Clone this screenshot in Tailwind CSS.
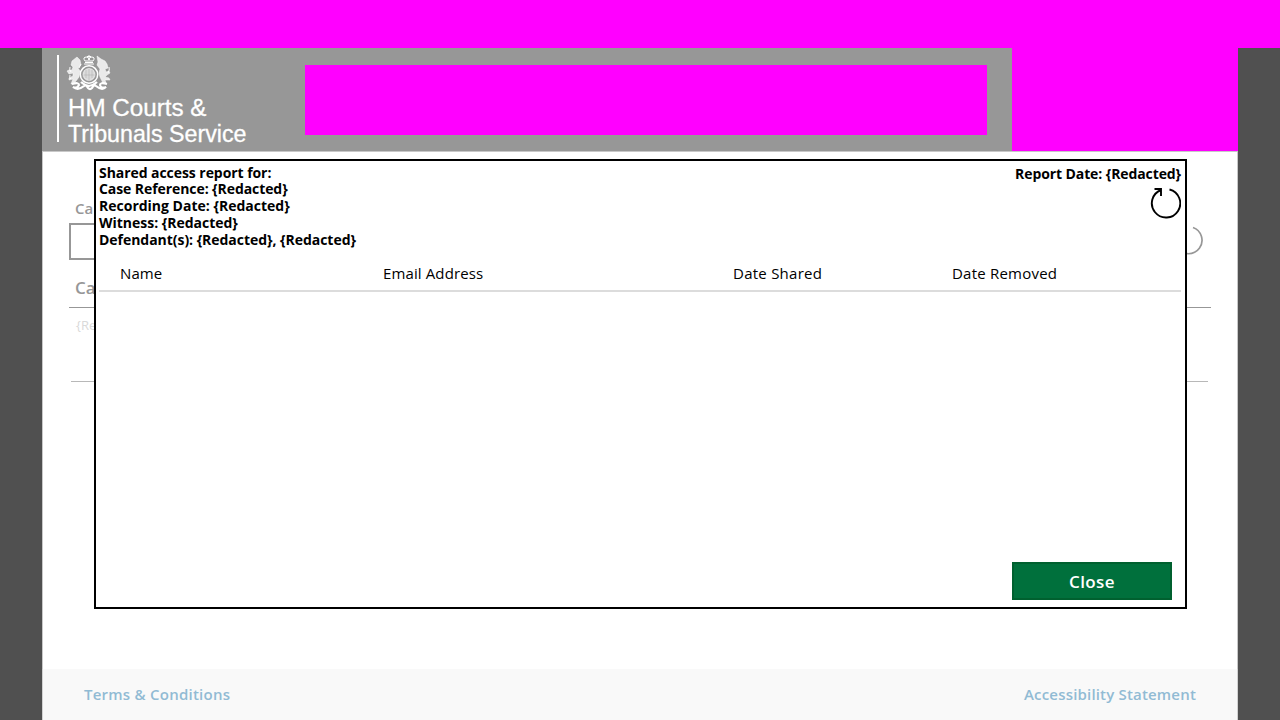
<!DOCTYPE html>
<html lang="en">
<head>
<meta charset="utf-8">
<title>Shared access report</title>
<script src="https://cdn.jsdelivr.net/npm/@tailwindcss/browser@4"></script>
</head>
<body class="h-[720px] w-[1280px] overflow-hidden bg-[#505050] font-['Open_Sans','Noto_Sans',sans-serif]">
<div class="flex h-full flex-col">
  <div class="h-12 shrink-0 bg-[#ff00ff]"></div>
  <div class="relative mx-[42px] flex grow flex-col bg-white">
    <header class="flex h-[103px] shrink-0 bg-[#979797] pl-[15px]">
      <div class="mt-[7px] flex h-[87px] w-[248px] border-l-2 border-white pl-[9px]">
        <svg class="h-[88px] w-[190px] shrink-0 overflow-visible" viewBox="0 0 190 88" fill="none" stroke="#fff">
          <g stroke-width="1">
            <path d="M17 6q-3-4 2-4q2 1 2 3q0-2 2-3q5 0 2 4zM16 9h10M21 5V0M19 1.500h4M17 7.500h8"/>
            <circle cx="21" cy="19.500" r="8.700" stroke-width="1.500"/>
            <circle cx="21" cy="19.500" r="6" fill="#fff" fill-opacity=".65" stroke-width=".6"/>
            <path d="M21 14v12M15.500 20h11M18 15v8M24 15v8" stroke="#a8a8a8" stroke-width=".5"/>
          </g>
          <path d="M9 2l3 3 1 5-3 3 2 3-1 6-3 4-3 3-2 0 2-5-4 1 0-2 4-2 0-3-4 1-2-3 2-1 3 0 1-3-2-2 1-4z" fill="#fff" fill-opacity=".8" stroke-width=".5"/>
          <path d="M29 1l4 3 4 2 2 3 1 4-3 1 1 3 3-1 1 2-3 2-2 2 4 1 1 2-5 0 1 3-3 0-3-6-1-4 1-4-3-4 1-3z" fill="#fff" fill-opacity=".8" stroke-width=".5"/>
          <path d="M2 12q-1 3 1 5M2 20q-1 3 1 4M41 12q1 3-1 6M13 9l-2 4" stroke-width="1"/>
          <path d="M4 29q7-2 7 1-2 4-6 2 5 4 11-1 2-2 4 2 2 2 4 0 2-4 4-2 6 5 10 1-5 2-6-2 0-3 7-1M13 27q3 3 8 4 5-1 8-4" stroke-width="2.200"/>
          <g fill="#fff" stroke="#fff" stroke-width=".3" font-family="Liberation Sans, sans-serif" font-size="24.400">
            <text x="0" y="61" textLength="138.500" lengthAdjust="spacingAndGlyphs">HM Courts &amp;</text>
            <text x="0" y="87" textLength="178.500" lengthAdjust="spacingAndGlyphs">Tribunals Service</text>
          </g>
        </svg>
      </div>
      <div class="mt-[17px] h-[70px] w-[682px] bg-[#ff00ff]"></div>
      <div class="ml-auto h-full w-[226px] bg-[#ff00ff]"></div>
    </header>
    <main class="grow border-x border-t border-[#c8c8c8] px-[26px] pt-[46px] text-[#979797]">
      <div class="h-[25px] pl-[6px] text-[15px] leading-[20px] font-semibold">Ca</div>
      <div class="flex justify-between">
        <div class="h-[37px] w-[300px] border-2 border-[#979797]"></div>
        <svg class="mt-[2px] mr-[6px] h-8 w-8" viewBox="0 0 32 32" fill="none" stroke="#979797" stroke-width="1.700"><path d="M20 2.500A13.500 13.500 0 1 1 11 2.500"/></svg>
      </div>
      <div class="h-[48px] border-b border-[#979797] pt-[17px] pl-[6px] text-[17px] leading-[21px] font-semibold">Ca</div>
      <div class="mr-[3px] ml-[2px] h-[74px] border-b border-[#b8b8b8] pt-[8px] pl-[5px] text-[13px] leading-[18px] text-[#d9d9d9]">{Re</div>
    </main>
    <footer class="flex h-[51px] shrink-0 justify-between border-x border-[#d2d2d2] bg-[#f9f9f9] px-[41px] pt-[15px] text-[15px] leading-[20px] font-semibold text-[#91bbd4]">
      <a class="tracking-[0.24px]">Terms &amp; Conditions</a>
      <a class="tracking-[0.18px]">Accessibility Statement</a>
    </footer>
    <section class="absolute top-[111px] left-[52px] flex h-[450px] w-[1093px] flex-col border-2 border-black bg-white pr-[4px] pl-[3px]">
      <div class="flex h-[92px] justify-between text-[14px] leading-[16.8px] font-bold tracking-[-0.06px] text-black">
        <div class="pt-[3.600px]">
          <p>Shared access report for:</p>
          <p class="tracking-[-0.08px]">Case Reference: {Redacted}</p>
          <p class="tracking-[0px]">Recording Date: {Redacted}</p>
          <p class="tracking-[-0.02px]">Witness: {Redacted}</p>
          <p class="tracking-[-0.04px]">Defendant(s): {Redacted}, {Redacted}</p>
        </div>
        <div class="flex flex-col items-end pt-[5px]">
          <p class="tracking-[-0.1px]">Report Date: {Redacted}</p>
          <svg class="mt-[4px] h-8 w-8" viewBox="0 0 32 32" fill="none" stroke="#000" stroke-width="1.900"><path d="M20.500 2.500A14.200 14.200 0 1 1 12 3M5.500 2h6.500v7"/></svg>
        </div>
      </div>
      <div class="flex h-[39px] border-b-2 border-[#dcdcdc] pt-[10px] pl-[21px] text-[15px] leading-[20px] text-black">
        <div class="w-[263px] tracking-[0.1px]">Name</div>
        <div class="w-[350px] tracking-[0.12px]">Email Address</div>
        <div class="w-[219px] tracking-[0.25px]">Date Shared</div>
        <div class="tracking-[0.22px]">Date Removed</div>
      </div>
      <button class="mt-auto mr-[9px] mb-[7px] h-[38px] w-[160px] self-end border-2 border-[#00602f] bg-[#00703c] text-[17px] leading-[22px] font-semibold tracking-[0.4px] text-white"><span class="block pt-px">Close</span></button>
    </section>
  </div>
</div>
</body>
</html>
